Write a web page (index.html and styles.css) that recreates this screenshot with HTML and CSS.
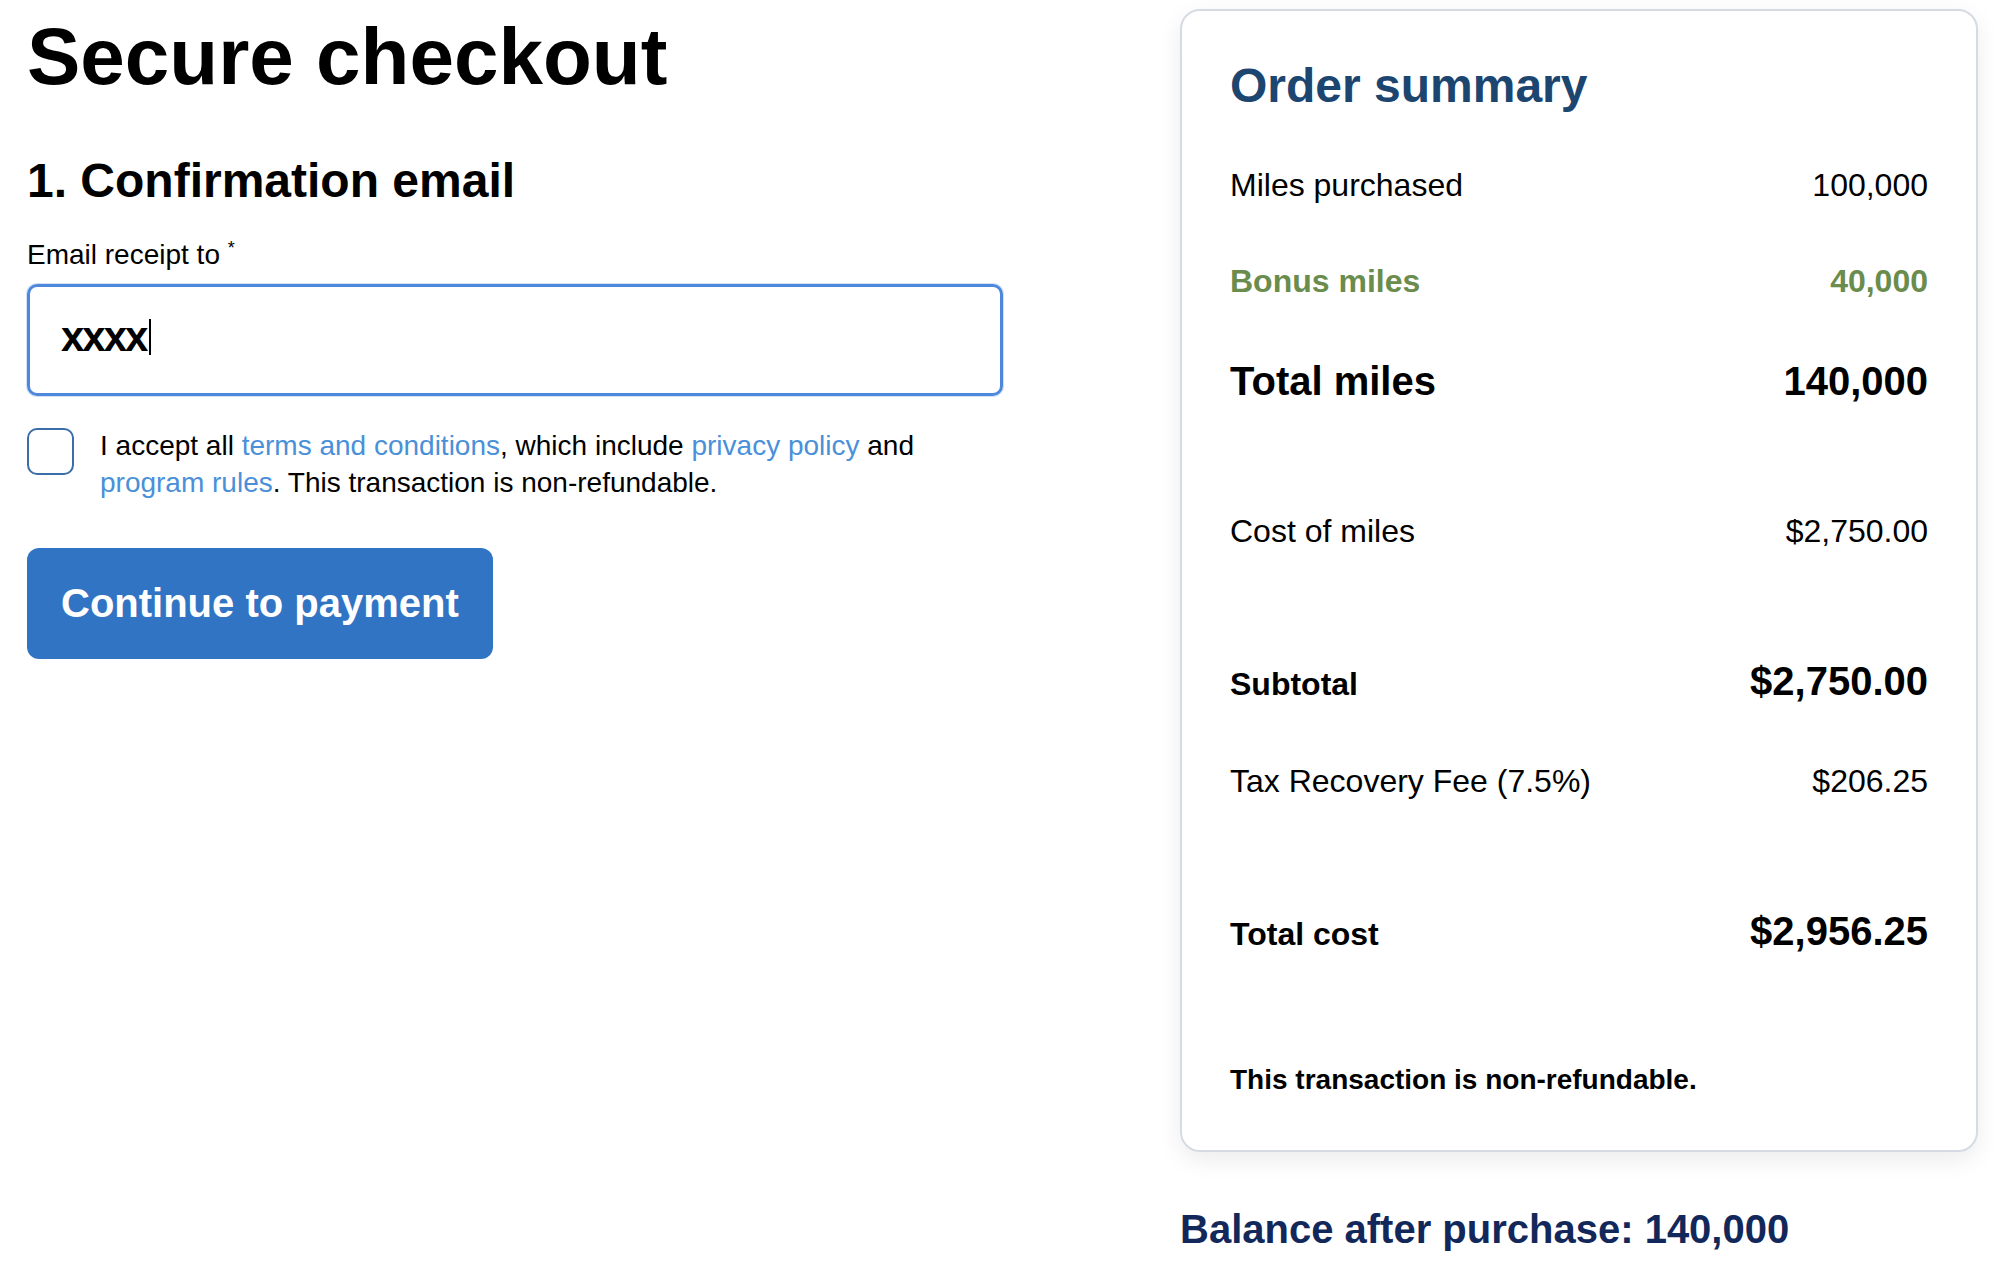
FILE: index.html
```html
<!DOCTYPE html>
<html lang="en">
<head>
    <meta charset="UTF-8">
    <meta name="viewport" content="width=device-width, initial-scale=1.0">
    <title>Secure checkout</title>
    <link rel="stylesheet" href="styles.css">
</head>
<body>
    <div class="page">
        <main class="checkout">
            <h1 class="title">Secure checkout</h1>
            <h2 class="step">1. Confirmation email</h2>
            <div class="field-label">Email receipt to <sup>*</sup></div>
            <div class="field">
                <span class="field-value">xxxx</span><span class="caret"></span>
            </div>
            <div class="consent">
                <input type="checkbox" id="accept">
                <p>I accept all <a href="#">terms and conditions</a>, which include <a href="#">privacy policy</a> and <a href="#">program rules</a>. This transaction is non-refundable.</p>
            </div>
            <button class="btn-primary">Continue to payment</button>
        </main>

        <aside class="sidebar">
            <section class="summary">
                <h2>Order summary</h2>
                <div class="group">
                    <div class="row"><span>Miles purchased</span><span>100,000</span></div>
                    <div class="row bonus"><span>Bonus miles</span><span>40,000</span></div>
                    <div class="row total"><span>Total miles</span><span>140,000</span></div>
                </div>
                <div class="group">
                    <div class="row"><span>Cost of miles</span><span>$2,750.00</span></div>
                </div>
                <div class="group">
                    <div class="row strong"><span>Subtotal</span><span class="amount">$2,750.00</span></div>
                    <div class="row"><span>Tax Recovery Fee (7.5%)</span><span>$206.25</span></div>
                </div>
                <div class="group">
                    <div class="row strong"><span>Total cost</span><span class="amount">$2,956.25</span></div>
                </div>
                <p class="note">This transaction is non-refundable.</p>
            </section>
            <h3 class="balance">Balance after purchase: 140,000</h3>
        </aside>
    </div>
</body>
</html>
```

FILE: styles.css
```css
* {
    box-sizing: border-box;
}
body {
    margin: 0;
    background: #fff;
    color: #000;
    font-family: "Liberation Sans", Arial, Helvetica, sans-serif;
}
.page {
    display: flex;
    justify-content: space-between;
    align-items: flex-start;
    padding: 9px 16px 0 27px;
}

/* left column */
.checkout {
    width: 976px;
}
.title {
    margin: 4px 0 0;
    font-size: 80px;
    line-height: 88px;
    font-weight: 700;
}
.step {
    margin: 52px 0 0;
    font-size: 48px;
    line-height: 56px;
    font-weight: 700;
}
.field-label {
    margin-top: 29px;
    font-size: 28px;
    line-height: 34px;
}
.field-label sup {
    font-size: 18px;
    line-height: 0;
    vertical-align: 10px;
}
.field {
    display: flex;
    align-items: center;
    height: 112px;
    margin-top: 12px;
    padding: 0 31px 6px;
    border: 3px solid #4d88dc;
    border-radius: 10px;
    box-shadow: 0 0 0 1px rgba(77, 136, 220, 0.25);
}
.field-value {
    font-size: 42px;
    line-height: 48px;
    font-weight: 700;
    letter-spacing: -2px;
}
.caret {
    width: 2px;
    height: 36px;
    margin-left: 3px;
    background: #000;
}
.consent {
    display: flex;
    gap: 26px;
    margin-top: 31px;
}
.consent input {
    appearance: none;
    flex: 0 0 47px;
    width: 47px;
    height: 47px;
    margin: 1px 0 0;
    border: 2px solid #3b6ea8;
    border-radius: 10px;
    background: #fff;
}
.consent p {
    margin: 0;
    font-size: 28px;
    line-height: 37px;
}
.consent a {
    color: #4a90d9;
    text-decoration: none;
}
.btn-primary {
    display: block;
    width: fit-content;
    margin-top: 47px;
    padding: 31px 34px;
    border: 0;
    border-radius: 12px;
    background: #3274c4;
    color: #fff;
    font: 700 40px/49px "Liberation Sans", Arial, sans-serif;
}

/* order summary */
.sidebar {
    width: 798px;
}
.summary {
    padding: 47px 48px 53px;
    border: 2px solid #d5dbe2;
    border-radius: 20px;
    box-shadow: 0 8px 24px rgba(0, 0, 0, 0.08);
}
.summary h2 {
    margin: 0;
    color: #1c4670;
    font-size: 48px;
    line-height: 56px;
}
.group {
    display: flex;
    flex-direction: column;
    gap: 48px;
    margin-top: 98px;
}
.summary h2 + .group {
    margin-top: 47px;
}
.row {
    display: flex;
    justify-content: space-between;
    align-items: baseline;
    font-size: 32px;
    line-height: 48px;
}
.row.bonus {
    color: #6a8c4c;
    font-weight: 700;
}
.row.total {
    font-size: 40px;
    line-height: 56px;
    font-weight: 700;
}
.row.strong {
    font-weight: 700;
}
.row.strong .amount {
    font-size: 40px;
    line-height: 56px;
}
.note {
    margin: 104px 0 0;
    font-size: 28px;
    line-height: 34px;
    font-weight: 700;
}
.balance {
    margin: 53px 0 0;
    color: #13285a;
    font-size: 40px;
    line-height: 48px;
    font-weight: 700;
}
```
